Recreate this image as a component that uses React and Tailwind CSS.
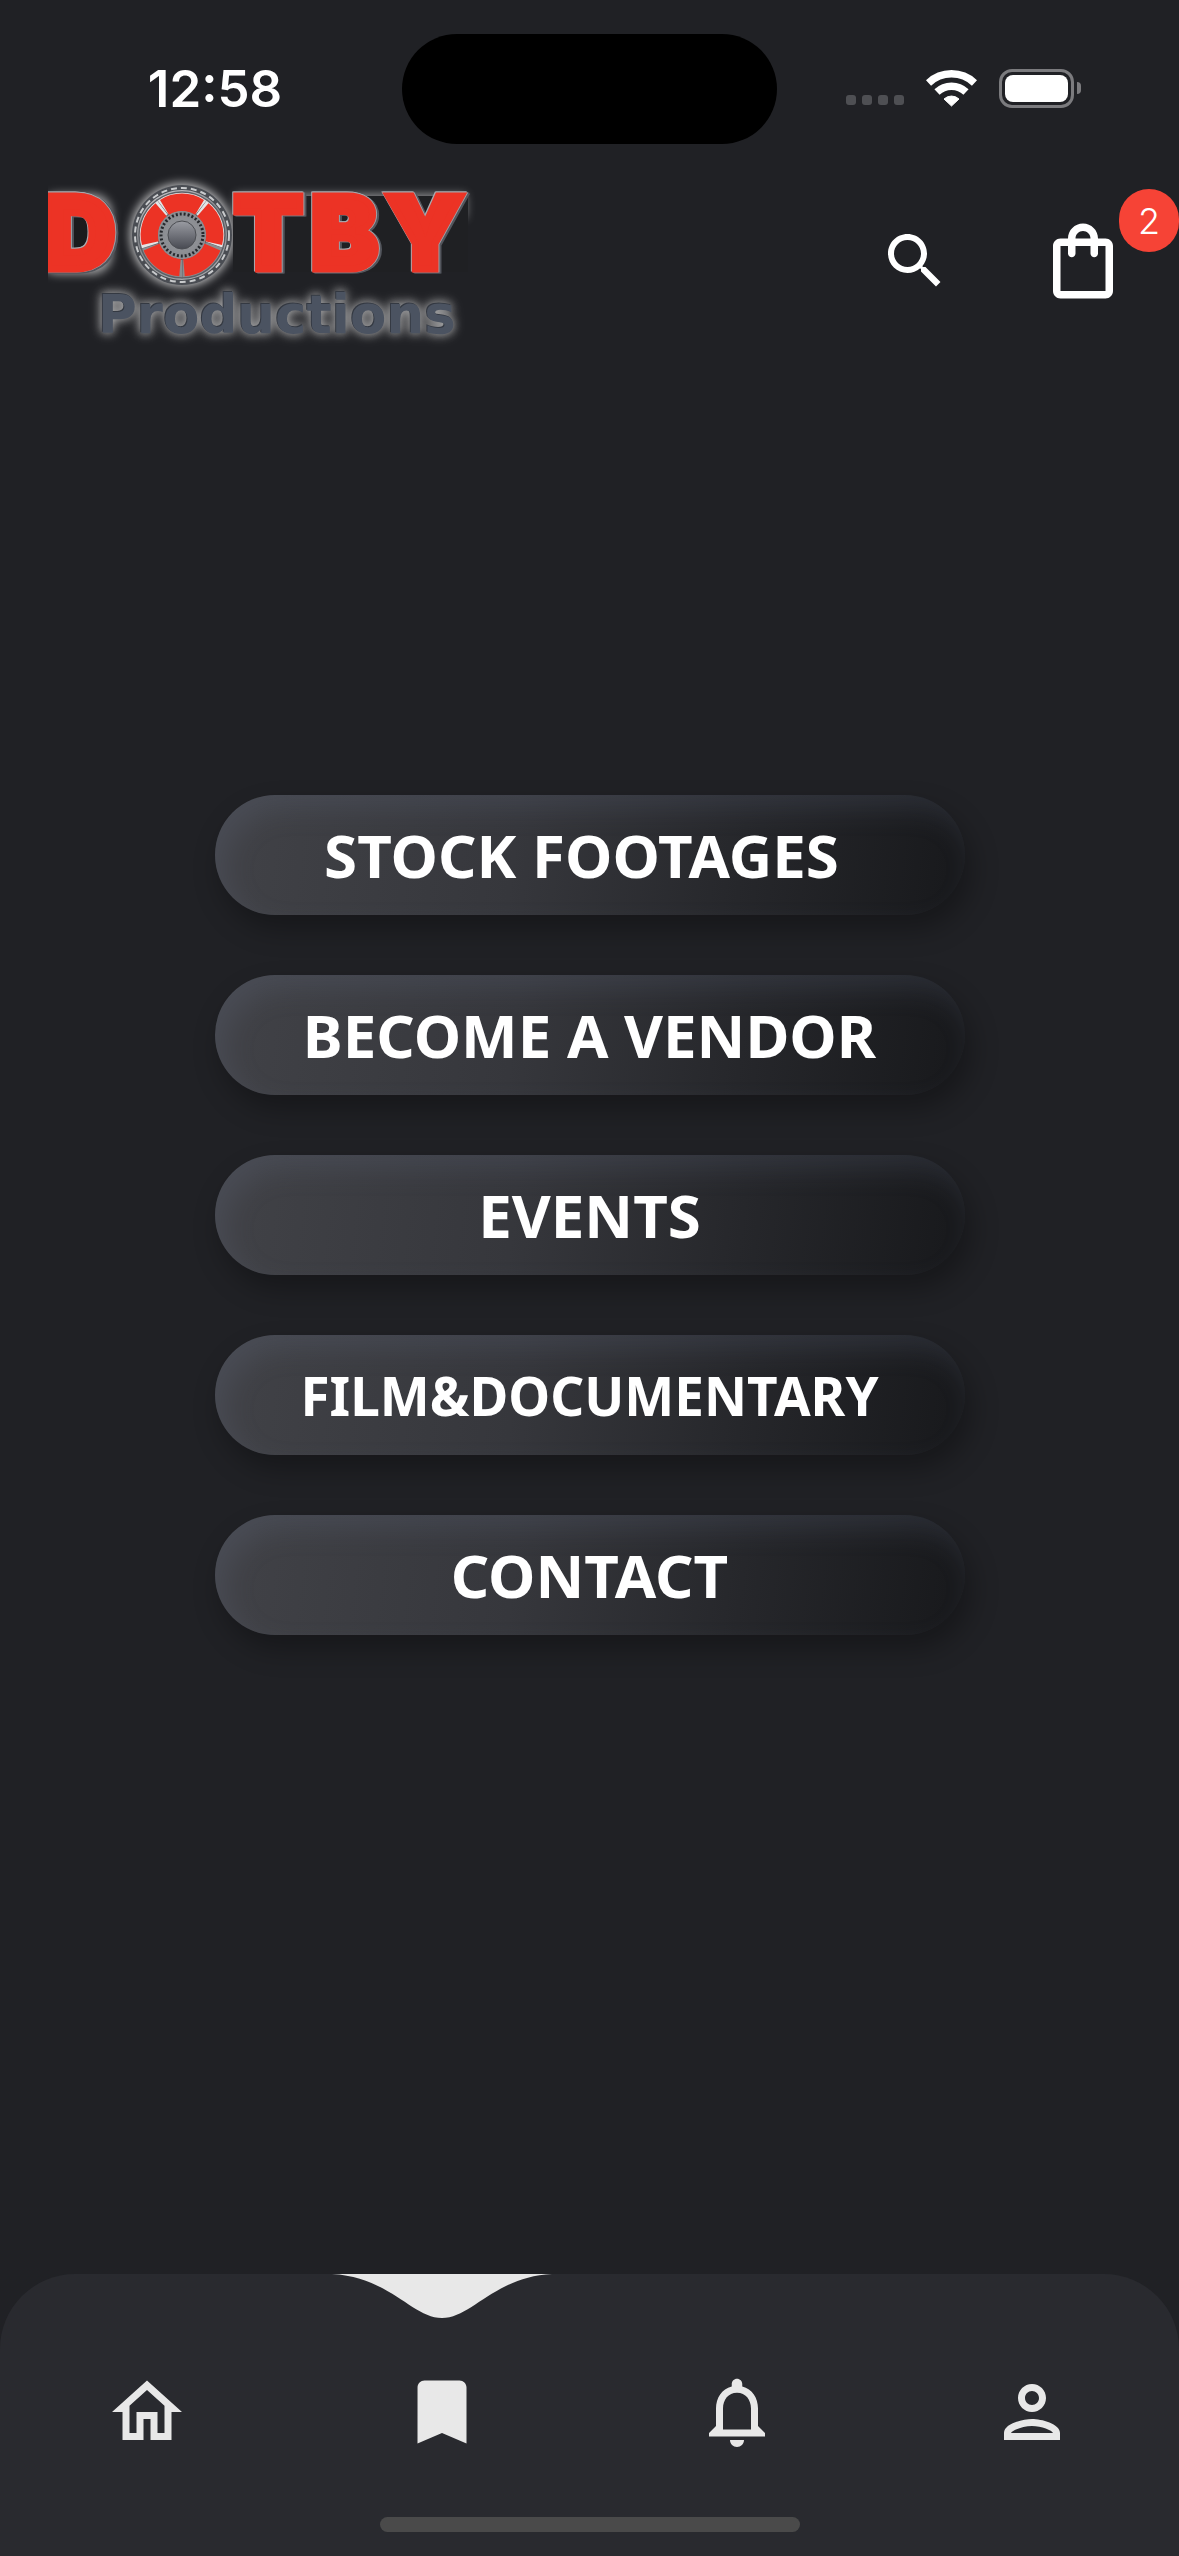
import React from "react";

const MENU = [
  { label: "STOCK FOOTAGES", size: "pr-4 text-[60px]" },
  { label: "BECOME A VENDOR", size: "text-[60px]" },
  { label: "EVENTS", size: "text-[60px]" },
  { label: "FILM&DOCUMENTARY", size: "text-[53px]" },
  { label: "CONTACT", size: "text-[60px]" },
];

const TABS = [
  {
    label: "Home",
    path: "M12 5.69l5 4.5V18h-2v-6H9v6H7v-7.81l5-4.5M12 3L2 12h3v8h6v-6h2v6h6v-8h3L12 3z",
  },
  {
    label: "Saved",
    active: true,
    path: "M17 3H7c-1.1 0-1.99.9-1.99 2L5 21l7-3 7 3V5c0-1.1-.9-2-2-2z",
  },
  {
    label: "Notifications",
    path: "M12 22c1.1 0 2-.9 2-2h-4c0 1.1.9 2 2 2zm6-6v-5c0-3.07-1.63-5.64-4.5-6.32V4c0-.83-.67-1.5-1.5-1.5s-1.5.67-1.5 1.5v.68C7.64 5.36 6 7.92 6 11v5l-2 2v1h16v-1l-2-2zm-2 1H8v-6c0-2.48 1.51-4.5 4-4.5s4 2.02 4 4.5v6z",
  },
  {
    label: "Profile",
    path: "M12 6c1.1 0 2 .9 2 2s-.9 2-2 2-2-.9-2-2 .9-2 2-2m0 10c2.7 0 5.8 1.29 6 2H6c.23-.72 3.31-2 6-2m0-12C9.79 4 8 5.79 8 8s1.79 4 4 4 4-1.79 4-4-1.79-4-4-4zm0 10c-2.67 0-8 1.34-8 4v2h16v-2c0-2.66-5.33-4-8-4z",
  },
];

function Icon({ path, className }) {
  return (
    <svg viewBox="0 0 24 24" fill="currentColor" aria-hidden="true" className={className}>
      <path d={path} />
    </svg>
  );
}

function Wheel() {
  return (
    <g transform="translate(152 75)">
      <circle r="50" fill="#4a4d53" />
      <circle r="47" fill="none" stroke="#c9cbcd" strokeWidth="2" strokeDasharray="6 4" />
      <circle r="45" fill="url(#metal)" />
      {[0, 72, 144, 216, 288].map((a) => (
        <g key={a} transform={`rotate(${a})`}>
          <path d="M-26 -35A43 43 0 0 1 26 -35L15 -19A24 24 0 0 0 -15 -19Z" fill="#5c5f65" />
          <path d="M-25 -34A42 42 0 0 1 25 -34L15 -20A25 25 0 0 0 -15 -20Z" fill={a === 144 || a === 216 ? "#8b8d90" : "#e4e4e5"} />
          <path d="M-22 -35A41 41 0 0 1 22 -35L13 -20A24 24 0 0 0 -13 -20Z" fill="#ec3325" />
        </g>
      ))}
      <circle r="24" fill="#8b8d92" />
      <circle r="21" fill="none" stroke="#25272b" strokeWidth="3" strokeDasharray="2 2" />
      <circle r="18" fill="#8d8f94" />
      <circle r="14" fill="url(#hub)" stroke="#4b4d52" strokeWidth="1" />
    </g>
  );
}

function Logo() {
  return (
    <svg viewBox="0 0 460 200" className="ml-[30px] w-[460px]" role="img" aria-label="Dotby Productions">
      <defs>
        <linearGradient id="metal" x1="0" y1="0" x2="0.4" y2="1">
          <stop offset="0" stopColor="#d0d1d3" />
          <stop offset="0.5" stopColor="#83858a" />
          <stop offset="1" stopColor="#a4a6a9" />
        </linearGradient>
        <linearGradient id="hub" x1="0" y1="0" x2="0" y2="1">
          <stop offset="0" stopColor="#9a9ca3" />
          <stop offset="1" stopColor="#484a52" />
        </linearGradient>
        <filter id="glow" x="-20%" y="-40%" width="140%" height="180%">
          <feGaussianBlur stdDeviation="5" />
        </filter>
        <clipPath id="edge">
          <rect x="18" y="0" width="430" height="200" />
        </clipPath>
      </defs>
      <g clipPath="url(#edge)">
        <circle cx="152" cy="75" r="52" fill="#ffffff" opacity="0.7" filter="url(#glow)" />
        <rect x="8" y="34" width="74" height="80" rx="20" fill="#ffffff" opacity="0.6" filter="url(#glow)" />
        <rect x="206" y="34" width="230" height="24" fill="#ffffff" opacity="0.5" filter="url(#glow)" />
        <rect x="203" y="36" width="235" height="76" fill="#1f2023" />
        <rect x="34" y="50" width="26" height="46" fill="#1a1b1d" />
        <g
          fontFamily="Inter, sans-serif"
          fontWeight="900"
          fontSize="100"
          fill="#ec3325"
          stroke="#ec3325"
          strokeWidth="7"
          className="[filter:drop-shadow(1px_0_0_#9ea1a7)_drop-shadow(-1px_-1px_0_#a9abb0)_drop-shadow(2px_1px_0_#53565d)]"
        >
          <text x="13" y="109">D</text>
          <text x="204 281 356" y="109">TBY</text>
        </g>
        <Wheel />
      </g>
      <text
        x="68"
        y="173"
        fontFamily="'DejaVu Sans', sans-serif"
        fontWeight="700"
        fontSize="53"
        fill="#4b5361"
        className="[filter:drop-shadow(-1px_-1px_0_#343942)_drop-shadow(0_0_5px_rgba(225,225,225,0.6))_drop-shadow(0_0_6px_rgba(225,225,225,0.35))]"
      >
        Productions
      </text>
    </svg>
  );
}

function StatusBar() {
  return (
    <div className="grid h-40 grid-cols-[1fr_375px_1fr] items-start pt-[34px]">
      <div className="flex h-[108px] items-center justify-center pl-7 text-[51px] leading-none font-semibold">
        12:58
      </div>
      <div className="h-[110px] rounded-full bg-black" />
      <div className="flex h-[108px] items-center justify-center pr-[30px]">
        <div className="mt-6 flex gap-[6px]">
          {[0, 1, 2, 3].map((i) => (
            <span key={i} className="size-[10px] rounded-[3px] bg-[#4e4f53]" />
          ))}
        </div>
        <svg viewBox="0 0 51 38" className="ml-[22px] w-[51px]" fill="none" stroke="#ffffff" aria-label="Wi-Fi">
          <path d="M2.5 14A33.5 33.5 0 0 1 48.5 14" strokeWidth="7.5" />
          <path d="M11 23A21 21 0 0 1 40 23" strokeWidth="7.5" />
          <path d="M18 30A11 11 0 0 1 33 30L25.5 37Z" fill="#ffffff" strokeWidth="1" strokeLinejoin="round" />
        </svg>
        <div className="ml-[22px] flex items-center gap-[3px]">
          <div className="h-[39px] w-[75px] rounded-[13px] border-3 border-[#7b7b7e] p-[3px]">
            <div className="h-full rounded-[8px] bg-white" />
          </div>
          <div className="h-3 w-1 rounded-r-full bg-[#7b7b7e]" />
        </div>
      </div>
    </div>
  );
}

export default function App() {
  return (
    <div className="flex min-h-screen flex-col bg-[#202125] font-['Inter',sans-serif] text-white">
      <StatusBar />

      <header className="flex items-center justify-between pr-[51px]">
        <Logo />
        <div className="flex items-center gap-[87px] pt-[2px]">
          <button type="button" aria-label="Search">
            <Icon
              className="size-[72px]"
              path="M15.5 14h-.79l-.28-.27C15.41 12.59 16 11.11 16 9.5 16 5.91 13.09 3 9.5 3S3 5.91 3 9.5 5.91 16 9.5 16c1.61 0 3.09-.59 4.23-1.57l.27.28v.79l5 4.99L20.49 19l-4.99-5zm-6 0C7.01 14 5 11.99 5 9.5S7.01 5 9.5 5 14 7.01 14 9.5 11.99 14 9.5 14z"
            />
          </button>
          <button type="button" aria-label="Cart, 2 items" className="relative">
            <Icon
              className="size-[90px]"
              path="M18 6h-2c0-2.21-1.79-4-4-4S8 3.79 8 6H6c-1.1 0-2 .9-2 2v12c0 1.1.9 2 2 2h12c1.1 0 2-.9 2-2V8c0-1.1-.9-2-2-2zm-6-2c1.1 0 2 .9 2 2h-4c0-1.1.9-2 2-2zm6 16H6V8h2v2c0 .55.45 1 1 1s1-.45 1-1V8h4v2c0 .55.45 1 1 1s1-.45 1-1V8h2v12z"
            />
            <span className="absolute -top-[27px] -right-[51px] flex h-[63px] w-[60px] items-center justify-center rounded-full bg-[#f64336] text-[36px] leading-none font-light">
              2
            </span>
          </button>
        </div>
      </header>

      <main className="flex flex-1 flex-col items-center justify-center gap-[60px] pb-[204px]">
        {MENU.map(({ label, size }) => (
          <button
            key={label}
            type="button"
            className={`flex h-[120px] w-[750px] max-w-full items-center justify-center rounded-full bg-linear-[97deg,#404146_5%,#36373c_40%,#26272b_70%,#191a1d_97%] font-['Noto_Sans',sans-serif] leading-none font-bold whitespace-nowrap shadow-[6px_14px_28px_rgba(0,0,0,0.3),inset_10px_14px_28px_rgba(112,120,144,0.2)] ${size}`}
          >
            {label}
          </button>
        ))}
      </main>

      <nav className="rounded-t-[75px] bg-[#292a2f]">
        <div className="grid grid-cols-4">
          {TABS.map(({ label, path, active }) => (
            <button
              key={label}
              type="button"
              aria-label={label}
              aria-current={active ? "page" : undefined}
              className="relative flex h-[243px] items-center justify-center pt-[33px] text-[#e8e8e8]"
            >
              {active && (
                <svg
                  viewBox="0 0 220 44"
                  fill="currentColor"
                  aria-hidden="true"
                  className="absolute top-0 left-1/2 w-[220px] -translate-x-1/2"
                >
                  <path d="M0 0C58 3 80 44 110 44S162 3 220 0Z" />
                </svg>
              )}
              <Icon path={path} className="size-[84px]" />
            </button>
          ))}
        </div>
        <div className="mx-auto mb-6 h-[15px] w-[420px] rounded-full bg-[#4a4a4a]" />
      </nav>
    </div>
  );
}
